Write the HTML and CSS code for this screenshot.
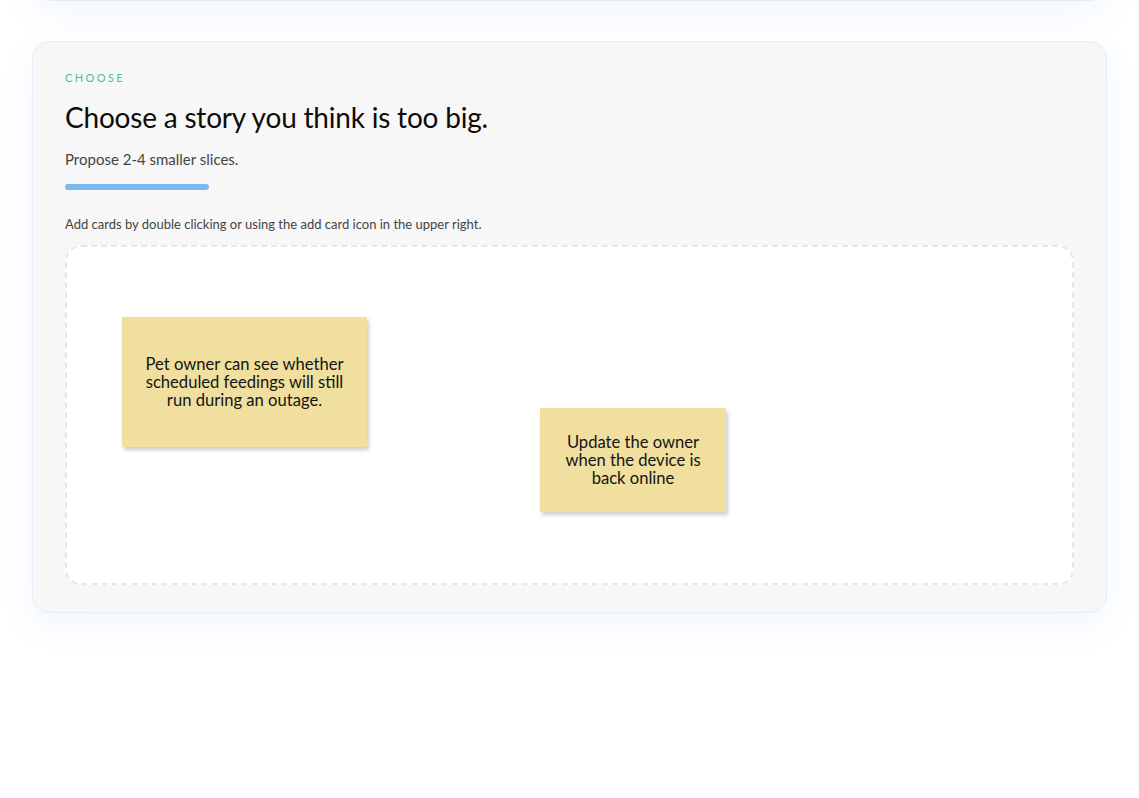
FILE: index.html
```html
<!DOCTYPE html>
<html lang="en">
<head>
<meta charset="utf-8">
<title>Choose</title>
<link rel="stylesheet" href="styles.css">
</head>
<body>
<div class="page">
  <section class="card card-prev"></section>
  <section class="card">
    <div class="eyebrow">CHOOSE</div>
    <h1 class="title">Choose a story you think is too big.</h1>
    <p class="subtitle">Propose 2-4 smaller slices.</p>
    <div class="bar"></div>
    <p class="hint">Add cards by double clicking or using the add card icon in the upper right.</p>
    <div class="board">
      <div class="sticky sticky-a">Pet owner can see whether scheduled feedings will still run during an outage.</div>
      <div class="sticky sticky-b">Update the owner when the device is back online</div>
    </div>
  </section>
</div>
</body>
</html>
```

FILE: styles.css
```css
html, body {
  margin: 0;
  padding: 0;
  background: #ffffff;
  overflow: hidden;
}
.page {
  padding: 0 32px;
  font-family: Lato, "Liberation Sans", sans-serif;
  color: #111;
}
.card {
  background: #f7f7f7;
  border: 1px solid #e2eefa;
  border-radius: 18px;
  box-shadow: 0 12px 36px rgba(60, 130, 220, 0.07);
  padding: 28px 32px 27px;
  margin-bottom: 40px;
}
.card-prev {
  height: 200px;
  margin-top: -199px;
  box-sizing: border-box;
}
.eyebrow {
  font-size: 11px;
  letter-spacing: 2.4px;
  color: #4dbf98;
  line-height: 14px;
  margin-top: 1px;
}
.title {
  font-size: 28px;
  font-weight: 400;
  line-height: 34px;
  margin: 15px 0 0;
  letter-spacing: -0.2px;
  color: #0c0c0c;
}
.subtitle {
  font-size: 15px;
  line-height: 20px;
  color: #444;
  margin: 15px 0 0;
}
.bar {
  width: 144px;
  height: 6px;
  border-radius: 3px;
  background: #7cb9ee;
  margin-top: 15px;
}
.hint {
  font-size: 13px;
  line-height: 18px;
  color: #444;
  margin: 25px 0 0;
}
.board {
  position: relative;
  height: 340px;
  margin-top: 12px;
  background: #fff;
  border: 2px dashed #dbe9f8;
  border-radius: 16px;
  box-sizing: border-box;
}
.sticky {
  position: absolute;
  box-sizing: border-box;
  background: #f0df9e;
  box-shadow: 2px 3px 4px rgba(0, 0, 0, 0.2);
  display: flex;
  align-items: center;
  justify-content: center;
  text-align: center;
  font-size: 16.6px;
  line-height: 18px;
  color: #141414;
  padding: 0 18px;
}
.sticky-a {
  left: 55px;
  top: 70px;
  width: 245px;
  height: 130px;
}
.sticky-b {
  left: 473px;
  top: 161px;
  width: 186px;
  height: 104px;
}
```
